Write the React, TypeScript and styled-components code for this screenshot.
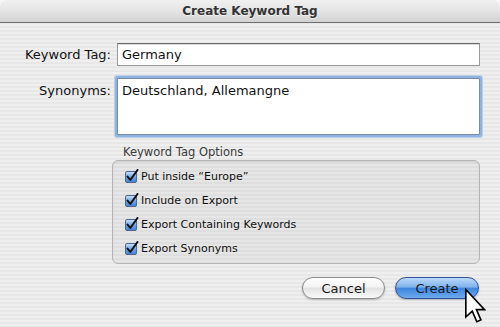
import React from "react";
import styled, { createGlobalStyle } from "styled-components";

const GlobalStyle = createGlobalStyle`
  html, body {
    margin: 0;
    padding: 0;
    background: #f6f6f6;
  }
`;

const Sheet = styled.div`
  position: relative;
  width: 500px;
  height: 327px;
  display: flex;
  flex-direction: column;
  border-radius: 8px 8px 0 0;
  overflow: hidden;
  font-family: "DejaVu Sans", "Liberation Sans", sans-serif;
  color: #1a1a1a;
  background: repeating-linear-gradient(
    to bottom,
    #efefef 0px,
    #efefef 2px,
    #e7e7e7 2px,
    #e7e7e7 4px
  );
`;

const TitleBar = styled.div`
  height: 22px;
  flex-shrink: 0;
  display: flex;
  align-items: center;
  justify-content: center;
  background: linear-gradient(to bottom, #f0f0f0 0%, #e6e6e6 45%, #d2d2d2 100%);
  border-bottom: 1px solid #6e6e6e;
  font-size: 12px;
  font-weight: bold;
  color: #333;
  text-shadow: 0 1px 0 rgba(255, 255, 255, 0.6);
`;

const Body = styled.div`
  flex: 1;
  display: flex;
  flex-direction: column;
  padding: 20px 20px 0 0;
`;

const FieldRow = styled.div<{ $top?: number }>`
  display: grid;
  grid-template-columns: 111px 1fr;
  column-gap: 6px;
  align-items: start;
  margin-top: ${(p) => p.$top ?? 0}px;
`;

const Label = styled.label<{ $offset?: number }>`
  text-align: right;
  font-size: 13px;
  color: #111;
  padding-top: ${(p) => p.$offset ?? 4}px;
  white-space: nowrap;
`;

const TextField = styled.div`
  height: 23px;
  box-sizing: border-box;
  background: #fff;
  border: 1px solid #9a9a9a;
  border-top-color: #6c6c6c;
  box-shadow: inset 0 1px 0 #d8d8d8;
  padding: 3px 4px;
  font-size: 13px;
  color: #111;
`;

const TextArea = styled.div`
  height: 57px;
  box-sizing: border-box;
  background: #fff;
  border: 1px solid #7a8aa0;
  box-shadow: 0 0 0 2px #8eb3de, 0 0 0 3px #b8d0ec;
  border-radius: 1px;
  padding: 4px 4px;
  font-size: 13px;
  color: #111;
`;

const GroupSection = styled.div`
  margin: 9px 0 0 112px;
  display: flex;
  flex-direction: column;
`;

const GroupTitle = styled.div`
  font-size: 11.5px;
  color: #3c3c3c;
  padding-left: 11px;
  height: 16px;
  line-height: 16px;
`;

const GroupBox = styled.div`
  height: 104px;
  box-sizing: border-box;
  border: 1px solid #b4b4b4;
  border-radius: 6px;
  background: rgba(0, 0, 0, 0.035);
  box-shadow: inset 0 1px 1px rgba(0, 0, 0, 0.08);
  padding: 3px 0 0 11px;
  display: flex;
  flex-direction: column;
`;

const CheckRow = styled.div`
  height: 24px;
  display: flex;
  align-items: center;
  gap: 1px;
  font-size: 11px;
  color: #111;
`;

const ButtonBar = styled.div`
  margin-top: 13px;
  display: flex;
  justify-content: flex-end;
  gap: 10px;
  padding-right: 1px;
`;

const PillButton = styled.div<{ $primary?: boolean; $width: number }>`
  width: ${(p) => p.$width}px;
  height: 22px;
  box-sizing: border-box;
  border-radius: 11px;
  display: flex;
  align-items: center;
  justify-content: center;
  font-size: 13px;
  color: #1a1a1a;
  border: 1px solid ${(p) => (p.$primary ? "#35509a" : "#8a8a8a")};
  background: ${(p) =>
    p.$primary
      ? "linear-gradient(to bottom, #bcdaf9 0%, #7fb2ec 45%, #3f86de 52%, #6aaaf0 100%)"
      : "linear-gradient(to bottom, #ffffff 0%, #f3f3f3 45%, #e2e2e2 52%, #fafafa 100%)"};
  box-shadow: 0 1px 2px rgba(0, 0, 0, 0.25);
`;

const Pointer = styled.svg`
  position: absolute;
  left: 464px;
  top: 287px;
`;

const CheckBox: React.FC = () => (
  <svg width="16" height="14" viewBox="0 0 16 14">
    <defs>
      <linearGradient id="cbfill" x1="0" y1="0" x2="0" y2="1">
        <stop offset="0" stopColor="#cfe3f8" />
        <stop offset="0.5" stopColor="#6fa6e4" />
        <stop offset="1" stopColor="#3f7fd0" />
      </linearGradient>
    </defs>
    <rect x="1.5" y="2.5" width="11" height="11" rx="1.5" fill="url(#cbfill)" stroke="#4a6994" />
    <path d="M3.5 7.5 L6.3 11 L13.5 1" fill="none" stroke="#111" strokeWidth="2" strokeLinecap="round" strokeLinejoin="round" />
  </svg>
);

const options = [
  "Put inside \u201cEurope\u201d",
  "Include on Export",
  "Export Containing Keywords",
  "Export Synonyms",
];

const App: React.FC = () => {
  return (
    <>
      <GlobalStyle />
      <Sheet>
        <TitleBar>Create Keyword Tag</TitleBar>
        <Body>
          <FieldRow>
            <Label>Keyword Tag:</Label>
            <TextField>Germany</TextField>
          </FieldRow>
          <FieldRow $top={12}>
            <Label $offset={5}>Synonyms:</Label>
            <TextArea>Deutschland, Allemangne</TextArea>
          </FieldRow>

          <GroupSection>
            <GroupTitle>Keyword Tag Options</GroupTitle>
            <GroupBox>
              {options.map((o) => (
                <CheckRow key={o}>
                  <CheckBox />
                  {o}
                </CheckRow>
              ))}
            </GroupBox>
          </GroupSection>

          <ButtonBar>
            <PillButton $width={83}>Cancel</PillButton>
            <PillButton $width={84} $primary>
              Create
            </PillButton>
          </ButtonBar>
        </Body>

        <Pointer width="22" height="38" viewBox="0 0 12 20">
          <path
            d="M1 1 L1 16 L4.5 12.8 L7 18.6 L9.2 17.6 L6.8 12 L11.2 12 Z"
            fill="#fff"
            stroke="#000"
            strokeWidth="0.9"
            strokeLinejoin="miter"
          />
        </Pointer>
      </Sheet>
    </>
  );
};

export default App;
